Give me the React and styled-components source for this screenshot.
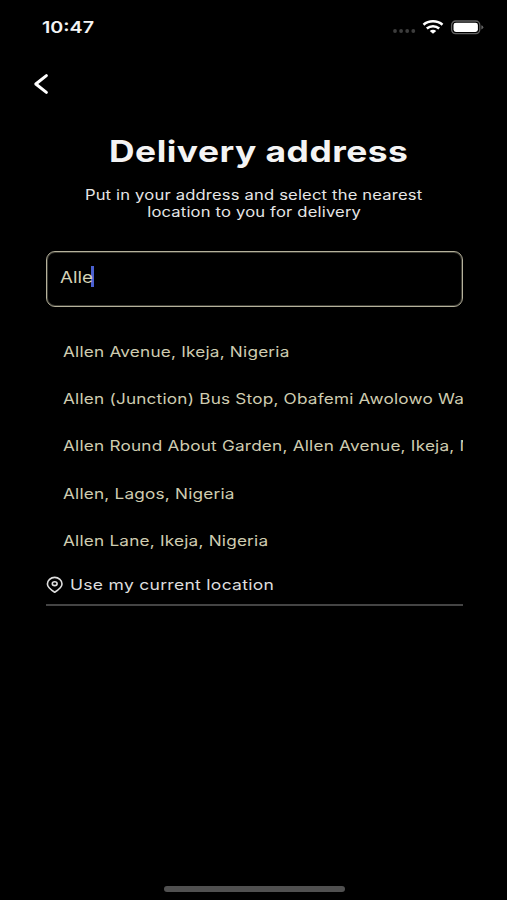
import React, { useState } from "react";
import styled, { createGlobalStyle } from "styled-components";

const GlobalStyle = createGlobalStyle`
  * {
    box-sizing: border-box;
  }

  body {
    margin: 0;
    background: #000;
    font-family: Inter, "Liberation Sans", sans-serif;
  }
`;

const places = [
  "Allen Avenue, Ikeja, Nigeria",
  "Allen (Junction) Bus Stop, Obafemi Awolowo Way",
  "Allen Round About Garden, Allen Avenue, Ikeja, Nigeria",
  "Allen, Lagos, Nigeria",
  "Allen Lane, Ikeja, Nigeria",
];

const Screen = styled.div`
  display: flex;
  flex-direction: column;
  width: 507px;
  height: 900px;
  overflow: hidden;
  background: #000;
  color: #f4f4f4;
`;

/* the type is set wide on every line */
const Wide = styled.span`
  display: inline-block;
  white-space: pre;
  transform: scaleX(1.2);
  transform-origin: ${(props) => props.$origin || "left"} center;
`;

const StatusBar = styled.header`
  display: flex;
  align-items: center;
  justify-content: space-between;
  height: 54px;
  padding: 0 23px 0 42px;
`;

const Time = styled.div`
  font-size: 16.4px;
  font-weight: 600;
  line-height: 20px;
`;

const StatusIcons = styled.div`
  display: flex;
  align-items: center;
  gap: 6px;

  svg {
    display: block;
  }
`;

const NavBar = styled.nav`
  display: flex;
  align-items: center;
  height: 60px;
  padding-left: 33px;
`;

const BackButton = styled.button`
  display: flex;
  padding: 0;
  border: 0;
  background: none;
`;

const Content = styled.main`
  display: flex;
  flex: 1;
  flex-direction: column;
  padding: 17px 44px 0 46px;
`;

const Title = styled.h1`
  margin: 0;
  padding-left: 8px;
  font-size: 29.5px;
  font-weight: 700;
  line-height: 40px;
  letter-spacing: 0.4px;
  text-align: center;
`;

const Subtitle = styled.p`
  display: flex;
  flex-direction: column;
  align-items: center;
  margin: 16px 0 0;
  padding-right: 1px;
  font-size: 13.8px;
  line-height: 17px;
  letter-spacing: 0.16px;
  color: #e6e6e6;
`;

const AddressField = styled.div`
  display: flex;
  align-items: flex-start;
  height: 56px;
  margin-top: 30px;
  padding: 13px;
  border: 1px solid #b5b19b;
  border-radius: 9px;
  box-shadow: inset 0 0 0 1px #3c3b33;
  color: #d5d2b6;
  font-size: 15.6px;
  line-height: 25px;
`;

const TypedText = styled.div`
  width: 31px;
`;

const Caret = styled.div`
  width: 3px;
  height: 21px;
  margin-top: 1px;
  background: #4a60d0;
`;

const PlaceList = styled.ul`
  margin: 20.6px 0 0;
  padding: 0;
  list-style: none;
`;

const Place = styled.li`
  height: 47.4px;
  padding-left: 17px;
  overflow: hidden;
  color: #cfccb0;
  font-size: 14.3px;
  line-height: 47.4px;
  letter-spacing: 0.18px;
`;

const CurrentLocation = styled.div`
  display: flex;
  align-items: center;
  height: 41px;
  padding-top: 1px;
  border-bottom: 2px solid #444;
  color: #dedede;
  font-size: 14.6px;
  letter-spacing: 0.24px;

  svg {
    margin-right: 6px;
  }
`;

const HomeIndicator = styled.div`
  width: 181px;
  height: 6px;
  margin: 0 auto 8px 164px;
  border-radius: 3px;
  background: #505050;
`;

const SignalDots = () => (
  <svg width="24" height="12" viewBox="0 0 24 12" fill="#3d3d3d">
    <circle cx="3" cy="10" r="1.9" />
    <circle cx="9.1" cy="10" r="1.9" />
    <circle cx="15.2" cy="10" r="1.9" />
    <circle cx="21.3" cy="10" r="1.9" />
  </svg>
);

const Wifi = () => (
  <svg width="22" height="15" viewBox="0 0 22 15">
    <g fill="none" stroke="#fff" strokeWidth="2.5">
      <path d="M1.5 4.8C6.7.2 15.3.2 20.5 4.8" />
      <path d="M4.8 8.5C8.3 5.5 13.7 5.5 17.2 8.5" />
    </g>
    <path d="M7.8 10.9C9.5 9.5 12.5 9.5 14.2 10.9L11 13.7Z" fill="#fff" />
  </svg>
);

const Battery = () => (
  <svg width="34" height="15" viewBox="0 0 34 15">
    <rect x="1.6" y="1" width="28.2" height="12.6" rx="4" fill="none" stroke="#626262" strokeWidth="1.3" />
    <rect x="3.5" y="2.7" width="24.4" height="9.2" rx="2.4" fill="#fff" />
    <path d="M31.3 5.2Q33.3 5.9 33.3 7.3T31.3 9.4Z" fill="#626262" />
  </svg>
);

const BackIcon = () => (
  <svg width="16" height="22" viewBox="0 0 16 22" fill="none" stroke="#fff" strokeWidth="3" strokeLinecap="round" strokeLinejoin="round">
    <path d="M13.4 2.6L2.8 11L13.4 19.4" />
  </svg>
);

const Pin = () => (
  <svg width="18" height="18" viewBox="0 0 18 18" fill="none" stroke="#dedede" strokeWidth="1.6">
    <path d="M8.7 16.2Q16 11.6 16 8A7.3 6.6 0 0 0 1.4 8Q1.4 11.6 8.7 16.2Z" strokeLinejoin="round" />
    <ellipse cx="8.7" cy="7.7" rx="2.4" ry="1.9" />
  </svg>
);

const App = () => {
  const [address] = useState("Alle");

  return (
    <Screen>
      <GlobalStyle />
      <StatusBar>
        <Time>
          <Wide>10:47</Wide>
        </Time>
        <StatusIcons>
          <SignalDots />
          <Wifi />
          <Battery />
        </StatusIcons>
      </StatusBar>
      <NavBar>
        <BackButton aria-label="Back">
          <BackIcon />
        </BackButton>
      </NavBar>
      <Content>
        <Title>
          <Wide $origin="center">Delivery address</Wide>
        </Title>
        <Subtitle>
          <Wide $origin="center">Put in your address and select the nearest</Wide>
          <Wide $origin="center">location to you for delivery</Wide>
        </Subtitle>
        <AddressField>
          <TypedText>
            <Wide>{address}</Wide>
          </TypedText>
          <Caret />
        </AddressField>
        <PlaceList>
          {places.map((place) => (
            <Place key={place}>
              <Wide>{place}</Wide>
            </Place>
          ))}
        </PlaceList>
        <CurrentLocation>
          <Pin />
          <Wide>Use my current location</Wide>
        </CurrentLocation>
      </Content>
      <HomeIndicator />
    </Screen>
  );
};

export default App;
